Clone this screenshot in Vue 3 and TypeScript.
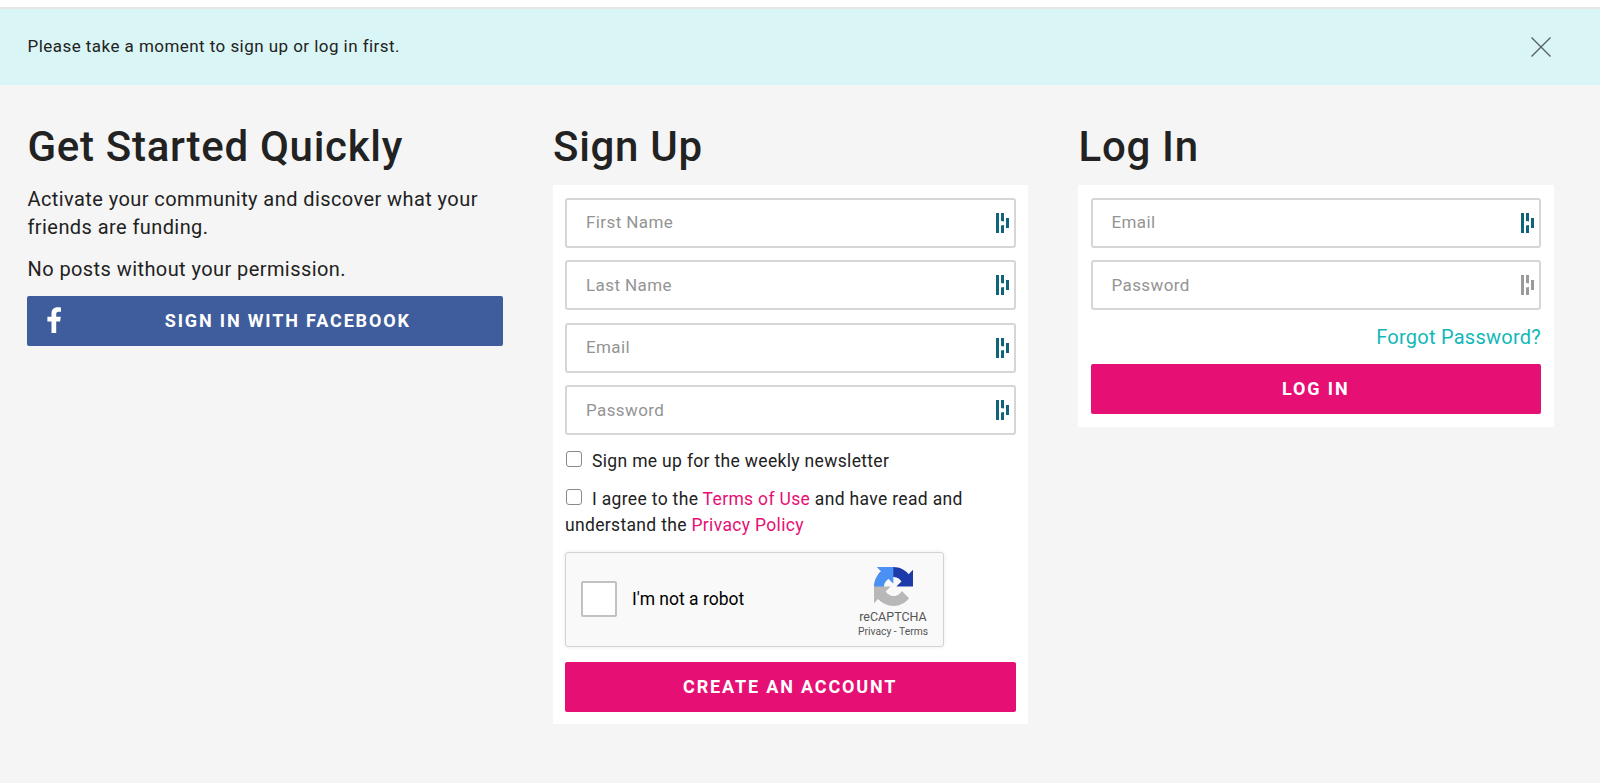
<script setup lang="ts">
const signupFields: { label: string; type: string }[] = [
  { label: 'First Name', type: 'text' },
  { label: 'Last Name', type: 'text' },
  { label: 'Email', type: 'email' },
  { label: 'Password', type: 'password' },
]
const loginFields: { label: string; type: string; muted: boolean }[] = [
  { label: 'Email', type: 'email', muted: false },
  { label: 'Password', type: 'password', muted: true },
]
</script>

<template>
  <div class="page">
    <div class="topline"></div>
    <div class="banner">
      <span>Please take a moment to sign up or log in first.</span>
      <svg class="close" viewBox="0 0 20 20" width="20" height="20" aria-label="Close">
        <path d="M0.5 0.5 L19.5 19.5 M19.5 0.5 L0.5 19.5" fill="none" stroke="#555f60" stroke-width="1.3" />
      </svg>
    </div>
    <main class="columns">
      <section class="col">
        <h1>Get Started Quickly</h1>
        <p class="intro">Activate your community and discover what your friends are funding.</p>
        <p class="intro second">No posts without your permission.</p>
        <button class="btn fb" type="button">
          <svg class="fb-icon" viewBox="0 0 14 26" width="14" height="26">
            <path d="M9.2 26V14.4h3.9l.7-4.6H9.2V7c0-1.3.5-2.3 2.4-2.3H14V.5C13.4.4 12.1.2 10.500.2 7 .2 4.500 2.300 4.500 6.400v3.400H.4v4.600h4.100V26z" fill="#fff" />
          </svg>
          <span class="fb-label">SIGN IN WITH FACEBOOK</span>
        </button>
      </section>

      <section class="col">
        <h1>Sign Up</h1>
        <form class="panel" @submit.prevent>
          <label v-for="f in signupFields" :key="f.label" class="field">
            <input :type="f.type" :placeholder="f.label" />
            <svg class="dash" viewBox="0 0 14 20" width="14" height="20">
              <path d="M1 0h3v20H1zM6 0h3v8.500L6 8zM6 12.500L9 12v8H6zM11 5h3v10h-3z" fill="#11637c" />
            </svg>
          </label>
          <label class="check first">
            <input type="checkbox" />
            <span>Sign me up for the weekly newsletter</span>
          </label>
          <label class="check agree">
            <input type="checkbox" />
            <span>I agree to the</span> <a href="#">Terms of Use</a> <span>and have read and</span><br />
            <span>understand the</span> <a href="#">Privacy Policy</a>
          </label>
          <div class="captcha">
            <span class="captcha-box"></span>
            <span class="captcha-text">I'm not a robot</span>
            <div class="captcha-brand">
              <svg viewBox="0 0 64 64" width="39" height="39">
                <path fill="#1c3aa9" d="M64 31.955l-.033-1.37V4.687l-7.16 7.16C50.948 4.674 42.033.093 32.05.093c-10.4 0-19.622 4.96-25.458 12.64l11.736 11.86a15.55 15.55 0 0 1 4.754-5.334c2.05-1.6 4.952-2.906 8.968-2.906.485 0 .86.057 1.135.163 4.976.393 9.288 3.14 11.828 7.124l-8.307 8.307c10.522-.04 22.4-.066 27.295.005" />
                <path fill="#4a90f5" d="M31.862.094l-1.37.033H4.594l7.16 7.16C4.58 13.147 0 22.06 0 32.046c0 10.4 4.96 19.622 12.64 25.458l11.86-11.736a15.55 15.55 0 0 1-5.334-4.754c-1.6-2.05-2.906-4.952-2.906-8.968 0-.485.057-.86.163-1.135.393-4.976 3.14-9.288 7.124-11.828l8.307 8.307c-.04-10.522-.066-22.4.005-27.295" />
                <path fill="#b8b8b8" d="M.001 32.045l.033 1.37v25.898l7.16-7.16c5.86 7.173 14.774 11.754 24.76 11.754 10.4 0 19.622-4.96 25.458-12.64l-11.736-11.86a15.55 15.55 0 0 1-4.754 5.334c-2.05 1.6-4.952 2.906-8.968 2.906-.485 0-.86-.057-1.135-.163-4.976-.393-9.288-3.14-11.828-7.124l8.307-8.307c-10.522.04-22.4.066-27.295-.005" />
              </svg>
              <span class="brand-name">reCAPTCHA</span>
              <span class="brand-links">Privacy - Terms</span>
            </div>
          </div>
          <button class="btn primary create" type="submit">CREATE AN ACCOUNT</button>
        </form>
      </section>

      <section class="col">
        <h1>Log In</h1>
        <form class="panel" @submit.prevent>
          <label v-for="f in loginFields" :key="f.label" class="field">
            <input :type="f.type" :placeholder="f.label" />
            <svg class="dash" viewBox="0 0 14 20" width="14" height="20">
              <path d="M1 0h3v20H1zM6 0h3v8.500L6 8zM6 12.500L9 12v8H6zM11 5h3v10h-3z" :fill="f.muted ? '#9a9a9a' : '#11637c'" />
            </svg>
          </label>
          <a class="forgot" href="#">Forgot Password?</a>
          <button class="btn primary login" type="submit">LOG IN</button>
        </form>
      </section>
    </main>
  </div>
</template>

<style>
html, body { margin: 0; background: #fff; }
</style>

<style scoped>
.page {
  height: 783px;
  background: #f5f5f5;
  font-family: Roboto, "Liberation Sans", sans-serif;
  color: #222;
  overflow: hidden;
}
.topline {
  height: 7px;
  background: #fff;
  border-bottom: 2px solid #e6e6e6;
}
.banner {
  height: 76px;
  box-sizing: border-box;
  padding: 0 49px 2px 27.5px;
  background: #daf5f5;
  display: flex;
  align-items: center;
  justify-content: space-between;
  font-size: 17px;
  letter-spacing: 0.45px;
}
.close { margin-top: 2px; }
.columns {
  display: grid;
  grid-template-columns: repeat(3, 475.5px);
  column-gap: 50px;
  padding: 0 27px;
}
h1 {
  margin: 0;
  height: 100px;
  box-sizing: border-box;
  padding: 38px 0 0 0.5px;
  font-size: 42px;
  line-height: 48px;
  font-weight: 500;
  letter-spacing: 0.7px;
  color: #222;
}
.intro {
  margin: 0;
  font-size: 20px;
  line-height: 28px;
  letter-spacing: 0.42px;
  padding-left: 0.5px;
}
.second { margin-top: 14px; }
.btn {
  display: flex;
  align-items: center;
  justify-content: center;
  width: 100%;
  height: 50px;
  padding: 0;
  border: 0;
  border-radius: 2px;
  color: #fff;
  font: 700 18px Roboto, "Liberation Sans", sans-serif;
  letter-spacing: 1.85px;
}
.fb {
  margin-top: 13px;
  padding: 0 0 2px 20px;
  background: #3f5d9c;
}
.fb-icon { margin-right: 12px; flex: none; }
.fb-label { flex: 1; text-align: center; }
.panel {
  background: #fff;
  padding: 12.5px;
  display: flex;
  flex-direction: column;
}
.field {
  height: 50px;
  box-sizing: border-box;
  border: 2px solid #d6d6d6;
  border-radius: 3px;
  margin-bottom: 12.5px;
  display: flex;
  align-items: center;
  padding-right: 5px;
  background: #fff;
}
.field input {
  flex: 1;
  min-width: 0;
  border: 0;
  outline: 0;
  padding: 0 0 1px 19px;
  background: transparent;
  font: 400 17px Roboto, "Liberation Sans", sans-serif;
  letter-spacing: 0.4px;
  color: #222;
}
.field input::placeholder { color: #949494; opacity: 1; }
.dash { flex: none; }
.check {
  display: block;
  font-size: 17.5px;
  line-height: 26.5px;
  letter-spacing: 0.33px;
  color: #222;
}
.check input {
  appearance: none;
  width: 16px;
  height: 16px;
  margin: 0 10px 0 1px;
  box-sizing: border-box;
  border: 1.5px solid #8a8a8a;
  border-radius: 3px;
  background: #fff;
  vertical-align: 0;
}
.first { margin-top: 0.5px; }
.agree { margin-top: 11px; }
.check a { color: #e60f73; text-decoration: none; }
.captcha {
  margin-top: 13px;
  width: 379px;
  height: 95px;
  box-sizing: border-box;
  border: 1px solid #d3d3d3;
  border-radius: 3px;
  background: #f9f9f9;
  box-shadow: 0 0 4px rgba(0, 0, 0, 0.08);
  display: flex;
  align-items: center;
  padding-left: 15px;
}
.captcha-box {
  width: 36px;
  height: 36px;
  box-sizing: border-box;
  border: 2px solid #c1c1c1;
  border-radius: 2px;
  background: #fff;
  flex: none;
}
.captcha-text {
  margin-left: 15px;
  font-size: 17.5px;
  color: #000;
  flex: 1;
}
.captcha-brand {
  width: 72px;
  margin-right: 14px;
  padding-top: 8px;
  display: flex;
  flex-direction: column;
  align-items: center;
  color: #555;
}
.brand-name { font-size: 12.5px; line-height: 15px; margin-top: 3px; }
.brand-links { font-size: 10.3px; line-height: 15px; }
.primary { background: #e60f73; }
.create { margin-top: 15px; }
.forgot {
  align-self: flex-end;
  margin-top: 0;
  color: #12b8b8;
  text-decoration: none;
  font-size: 20px;
  line-height: 28px;
  letter-spacing: 0.25px;
}
.login { margin-top: 13.5px; padding-bottom: 2px; }
</style>
